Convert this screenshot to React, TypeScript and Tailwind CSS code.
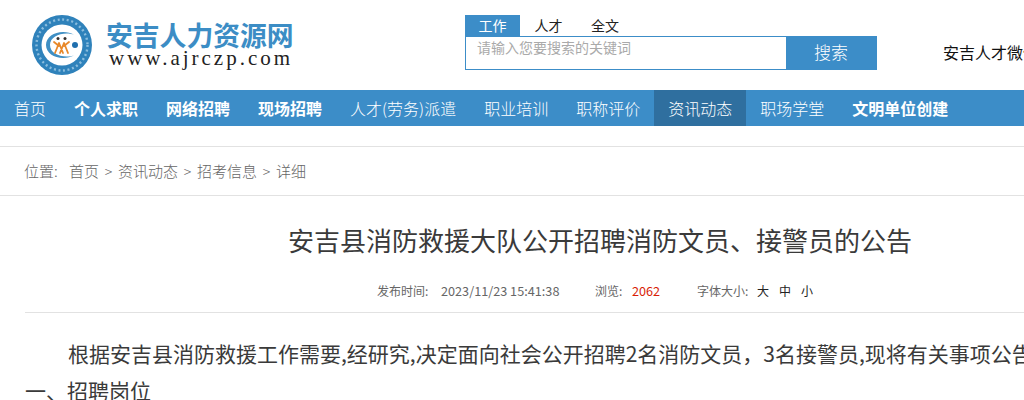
import React from "react";

const navItems = [
  { label: "首页" },
  { label: "个人求职", bold: true },
  { label: "网络招聘", bold: true },
  { label: "现场招聘", bold: true },
  { label: "人才(劳务)派遣" },
  { label: "职业培训" },
  { label: "职称评价" },
  { label: "资讯动态", active: true },
  { label: "职场学堂" },
  { label: "文明单位创建", bold: true },
];

const Logo = () => (
  <svg width="62" height="62" viewBox="0 0 62 62" className="shrink-0">
    <circle cx="31" cy="31" r="30" fill="#2f82bb" />
    <circle cx="31" cy="31" r="25.5" fill="none" stroke="#a9d0ea" strokeWidth="2.4" strokeDasharray="2 2.6" opacity="0.75" />
    <circle cx="31" cy="31" r="20.5" fill="#ffffff" />
    <path d="M44 21 C31 14 15 20 15 31 C15 42 31 48 44 41 C34 45 19 41 19 31 C19 21 34 17 44 21 Z" fill="#3f8fc4" />
    <circle cx="44" cy="31" r="3" fill="#1f6fae" />
    <path
      d="M24 39 L28 29 M32 39 L28 29 M29 39 L33 29 M37 39 L33 29 M23 28 L28 32 M38 28 L33 32"
      stroke="#e8892b"
      strokeWidth="1.8"
      fill="none"
      strokeLinecap="round"
    />
    <circle cx="27" cy="24.5" r="1.5" fill="#33302e" />
    <circle cx="34" cy="24.5" r="1.5" fill="#33302e" />
  </svg>
);

export default function App() {
  return (
    <div className="w-[1024px] h-[400px] overflow-hidden bg-white font-['Noto_Sans_CJK_SC',sans-serif] text-[#333]">
      <div className="w-[1200px]">
        {/* Header */}
        <header className="h-[90px] flex">
          <div className="w-[465px] pl-[31px] pt-[14px] flex items-start gap-[13px]">
            <Logo />
            <div className="pt-[7px]">
              <div className="text-[26.8px] leading-[28px] font-bold text-[#3c8dc5] whitespace-nowrap">
                安吉人力资源网
              </div>
              <div className="font-['Liberation_Serif',serif] text-[21px] leading-[18px] tracking-[3px] pl-[3px] text-[#222] whitespace-nowrap">
                www.ajrczp.com
              </div>
            </div>
          </div>
          <div className="w-[412px] pt-[15px]">
            <div className="flex h-[21px] text-[14px] leading-[21px] text-[#222]">
              <span className="w-[55px] text-center bg-[#3c8dc8] text-white">工作</span>
              <span className="w-[57px] text-center">人才</span>
              <span className="w-[56px] text-center">全文</span>
            </div>
            <div className="flex h-[34px] border border-[#3c8dc8]">
              <div className="flex-1 pl-[11px] text-[14px] leading-[20px] text-[#aaa]">请输入您要搜索的关键词</div>
              <button className="w-[90px] pb-[2px] bg-[#3c8dc8] text-white text-[17px] font-light">搜索</button>
            </div>
          </div>
          <div className="pl-[66px] pt-[40px] text-[16px] leading-[24px] text-[#111] whitespace-nowrap">安吉人才微信</div>
        </header>

        {/* Nav */}
        <nav className="h-[36px] bg-[#3c8dc8] flex text-[16px] leading-[36px] text-white">
          {navItems.map((item) => (
            <a
              key={item.label}
              className={`px-[14px] whitespace-nowrap ${item.bold ? "font-bold" : "font-light"} ${item.active ? "bg-[#2f6f9f]" : ""}`}
            >
              {item.label}
            </a>
          ))}
        </nav>

        {/* Breadcrumb */}
        <div className="mt-[20px] h-[50px] border-y border-[#e2e2e2] pl-[24px] flex items-center text-[15px] font-light text-[#666] whitespace-nowrap">
          <span className="w-[45px]">位置:</span>
          <span>首页</span>
          <span className="w-[19px] text-center text-[14px]">&gt;</span>
          <span>资讯动态</span>
          <span className="w-[19px] text-center text-[14px]">&gt;</span>
          <span>招考信息</span>
          <span className="w-[19px] text-center text-[14px]">&gt;</span>
          <span>详细</span>
        </div>

        {/* Article */}
        <main className="px-[25px]">
          <h1 className="mt-[24px] text-center text-[26px] leading-[40px] font-normal text-[#3a3a3a]">
            安吉县消防救援大队公开招聘消防文员、接警员的公告
          </h1>
          <div className="mt-[21px] h-[32px] pb-[10px] pl-[352px] flex text-[12px] leading-[20px] text-[#666] border-b border-[#e2e2e2] whitespace-nowrap">
            <span className="w-[64px]">发布时间:</span>
            <span className="w-[154px] text-[12.7px]">2023/11/23 15:41:38</span>
            <span className="w-[37px]">浏览:</span>
            <span className="w-[65px] text-[12.7px] text-[#d81e06]">2062</span>
            <span className="w-[60px]">字体大小:</span>
            <span className="flex gap-[10px] text-[#222]">
              <span>大</span>
              <span>中</span>
              <span>小</span>
            </span>
          </div>
          <div className="mt-[22px] text-[21px] leading-[37px] text-[#3a3a3a]">
            <p className="indent-[43px] whitespace-nowrap">
              根据安吉县消防救援工作需要,经研究,决定面向社会公开招聘2名消防文员{"\uFF0C"}3名接警员,现将有关事项公告如下:
            </p>
            <p>一、招聘岗位</p>
          </div>
        </main>
      </div>
    </div>
  );
}
